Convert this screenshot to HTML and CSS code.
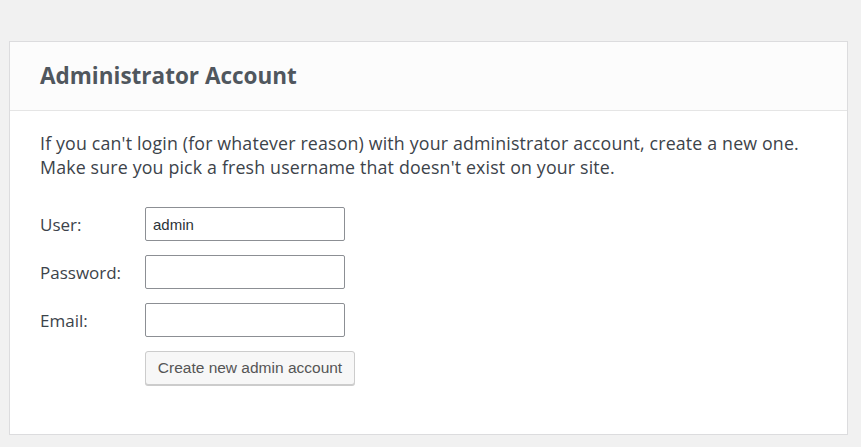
FILE: index.html
```html
<!DOCTYPE html>
<html>
<head>
<meta charset="utf-8">
<link rel="stylesheet" href="styles.css">
</head>
<body>
<div class="page">
  <div class="card">
    <div class="card-header">
      <h2 class="title">Administrator Account</h2>
    </div>
    <div class="card-body">
      <p class="intro">If you can't login (for whatever reason) with your administrator account, create a new one.<br>Make sure you pick a fresh username that doesn't exist on your site.</p>
      <div class="form">
        <div class="row">
          <label class="label">User:</label>
          <input class="field" type="text" value="admin">
        </div>
        <div class="row">
          <label class="label">Password:</label>
          <input class="field" type="text" value="">
        </div>
        <div class="row">
          <label class="label">Email:</label>
          <input class="field" type="text" value="">
        </div>
        <div class="row">
          <span class="label"></span>
          <button class="btn" type="button">Create new admin account</button>
        </div>
      </div>
    </div>
  </div>
</div>
</body>
</html>
```

FILE: styles.css
```css
html, body {
  margin: 0;
  padding: 0;
  background: #f1f1f1;
}
.page {
  padding: 41px 13px 12px 9px;
}
.card {
  background: #fff;
  border: 1px solid #dcdcde;
  font-family: "Open Sans", sans-serif;
  color: #3c434a;
}
.card-header {
  background: #fcfcfc;
  border-bottom: 1px solid #e5e5e5;
  height: 68px;
  display: flex;
  align-items: center;
  padding: 0 30px;
}
.title {
  margin: -1px 0 0 0;
  font-size: 22.5px;
  font-weight: 700;
  color: #50575e;
}
.card-body {
  padding: 20px 30px 49px 30px;
}
.intro {
  margin: 0 0 28px 0;
  font-size: 17.8px;
  letter-spacing: 0.16px;
  line-height: 24px;
  color: #3c434a;
}
.form {
  display: flex;
  flex-direction: column;
  gap: 14px;
}
.row {
  display: flex;
  align-items: center;
}
.label {
  width: 105px;
  font-size: 17px;
  color: #3c434a;
}
.field {
  box-sizing: border-box;
  width: 200px;
  height: 34px;
  margin: 0;
  border: 1px solid #8c8f94;
  border-radius: 2px;
  padding: 0 7px;
  font-family: "Liberation Sans", Arial, sans-serif;
  font-size: 15px;
  color: #2c3338;
  background: #fff;
}
.btn {
  box-sizing: border-box;
  width: 210px;
  height: 34px;
  padding: 0;
  margin: 0;
  border: 1px solid #ccc;
  border-radius: 3px;
  background: #f7f7f7;
  box-shadow: 0 1px 0 #ccc;
  font-family: "Liberation Sans", Arial, sans-serif;
  font-size: 15.5px;
  color: #555;
}
```
